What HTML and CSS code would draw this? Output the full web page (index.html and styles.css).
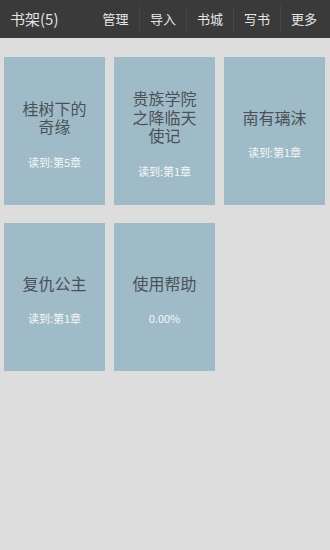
FILE: index.html
```html
<!DOCTYPE html>
<html lang="zh">
<head>
<meta charset="utf-8">
<title>书架</title>
<link rel="stylesheet" href="styles.css">
</head>
<body>
<header class="bar">
  <div class="bar-title">书架(5)</div>
  <nav class="bar-menu">
    <span class="bar-item">管理</span>
    <span class="bar-item sep">导入</span>
    <span class="bar-item sep">书城</span>
    <span class="bar-item sep">写书</span>
    <span class="bar-item sep">更多</span>
  </nav>
</header>
<main class="shelf">
  <div class="book">
    <div class="book-title">桂树下的奇缘</div>
    <div class="book-sub">读到:第5章</div>
  </div>
  <div class="book">
    <div class="book-title">贵族学院之降临天使记</div>
    <div class="book-sub">读到:第1章</div>
  </div>
  <div class="book">
    <div class="book-title">南有璃沫</div>
    <div class="book-sub">读到:第1章</div>
  </div>
  <div class="book">
    <div class="book-title">复仇公主</div>
    <div class="book-sub">读到:第1章</div>
  </div>
  <div class="book">
    <div class="book-title">使用帮助</div>
    <div class="book-sub">0.00%</div>
  </div>
</main>
</body>
</html>
```
FILE: styles.css
```css
html, body {
  margin: 0;
  padding: 0;
  background: #dddddd;
  font-family: "Noto Sans CJK SC", "Noto Sans", Roboto, sans-serif;
}
body {
  width: 330px;
  height: 550px;
  overflow: hidden;
}
.bar {
  height: 38px;
  background: #3a3a3a;
  display: flex;
  align-items: center;
  padding: 0 3px 0 10px;
}
.bar-title {
  flex: 1;
  color: #e2e2e2;
  font-size: 15px;
  line-height: 20px;
}
.bar-menu {
  display: flex;
  align-items: center;
}
.bar-item {
  width: 47px;
  height: 26px;
  line-height: 26px;
  text-align: center;
  color: #e6e6e6;
  font-size: 13px;
  box-sizing: border-box;
}
.bar-item.sep {
  border-left: 1px solid #474747;
}
.shelf {
  display: grid;
  grid-template-columns: repeat(3, 101px);
  grid-auto-rows: 148px;
  column-gap: 9px;
  row-gap: 18px;
  padding: 19px 5px 0 4px;
}
.book {
  background: #a0bbc8;
  display: flex;
  flex-direction: column;
  justify-content: center;
  align-items: center;
  padding: 0 12px 9px;
  text-align: center;
}
.book-title {
  color: #4a5157;
  font-size: 16px;
  line-height: 18.5px;
}
.book-sub {
  height: 0;
  margin-top: 19px;
  color: #f4f6f7;
  font-size: 11px;
  line-height: 14px;
  white-space: nowrap;
}
```
